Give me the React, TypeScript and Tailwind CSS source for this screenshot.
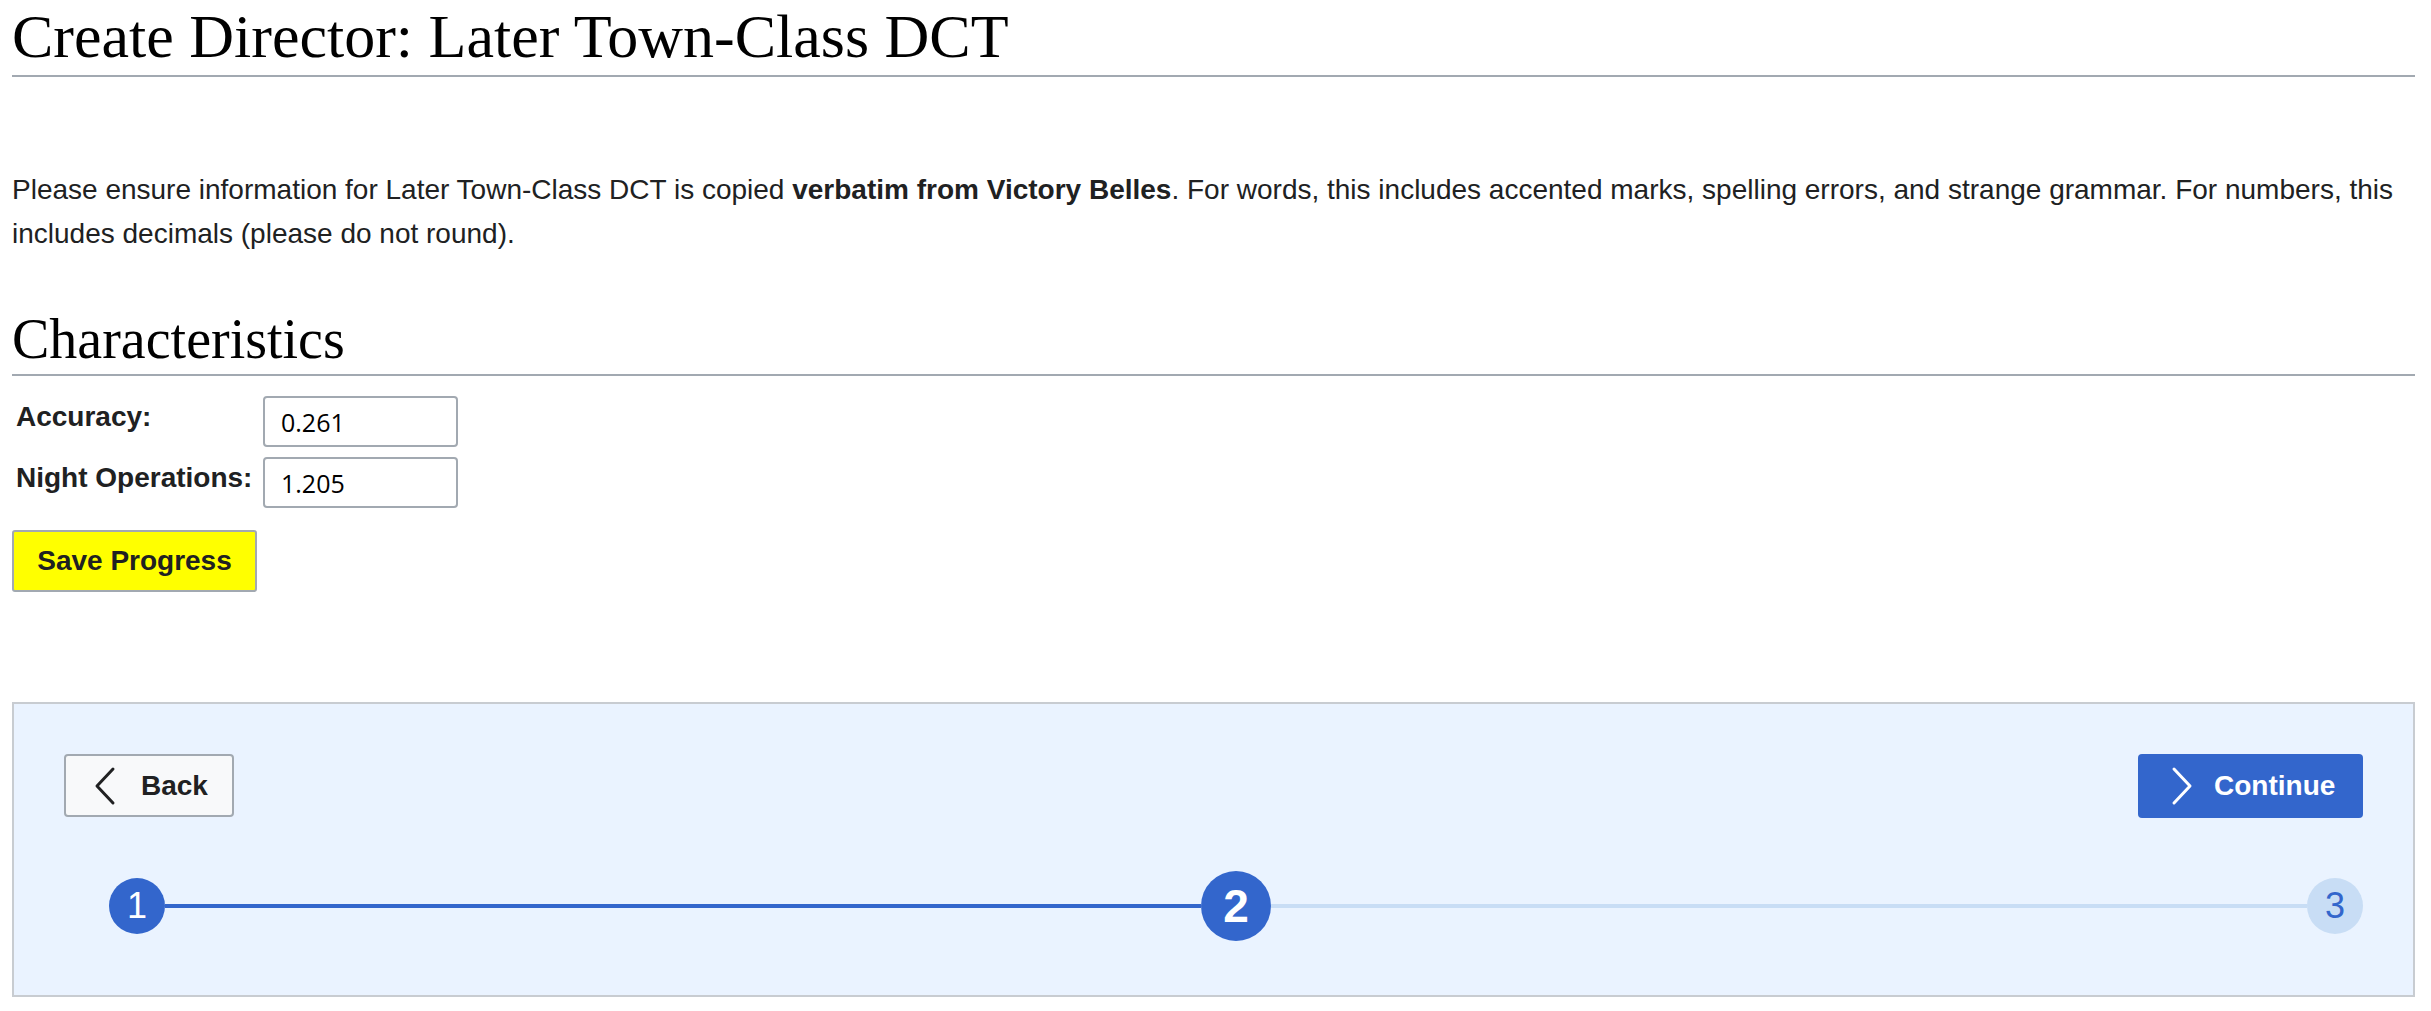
import React from 'react';

const sans = "font-['Liberation_Sans',Arial,sans-serif]";
const serif = "font-['Liberation_Serif','Times_New_Roman',serif]";

const ChevronLeft: React.FC<{ className?: string }> = ({ className }) => (
    <svg width="24" height="40" viewBox="0 0 24 40" fill="none" className={className}>
        <polyline points="20,3 4,20 20,37" stroke="currentColor" strokeWidth="3" strokeLinecap="round" strokeLinejoin="round" />
    </svg>
);

const ChevronRight: React.FC<{ className?: string }> = ({ className }) => (
    <svg width="24" height="40" viewBox="0 0 24 40" fill="none" className={className}>
        <polyline points="4,3 20,20 4,37" stroke="currentColor" strokeWidth="3" strokeLinecap="round" strokeLinejoin="round" />
    </svg>
);

const FieldRow: React.FC<{ label: string, value: string }> = ({ label, value }) => (
    <div className="flex items-start">
        <div className="w-[251px] pl-[4px] pt-[5px] text-[28px] leading-[32px] font-bold text-[#202122]">{label}</div>
        <input
            defaultValue={value}
            className="w-[195px] h-[51px] border-2 border-[#a2a9b1] rounded-[4px] bg-white pl-[16px] text-[25px] text-black font-['Open_Sans','Noto_Sans',sans-serif] outline-none"
        />
    </div>
);

export default function App() {
    return (
        <div className={`min-h-screen bg-white pl-[12px] pr-[16px] ${sans}`}>
            {/* Page heading */}
            <h1 className={`${serif} mt-[2px] text-[62px] leading-[68px] font-normal text-black pb-[5px] border-b-2 border-[#a2a9b1]`}>
                Create Director: Later Town-Class DCT
            </h1>

            <p className="mt-[91px] text-[28px] leading-[44px] text-[#202122]">
                Please ensure information for Later Town-Class DCT is copied <b>verbatim from Victory Belles</b>. For words, this includes accented marks, spelling errors, and strange grammar. For numbers, this includes decimals (please do not round).
            </p>

            <h2 className={`${serif} mt-[53px] text-[56px] leading-[61px] font-normal text-black pb-[4px] border-b-2 border-[#a2a9b1]`}>
                Characteristics
            </h2>

            {/* Form */}
            <div className="mt-[20px] flex flex-col gap-[10px]">
                <FieldRow label="Accuracy:" value="0.261" />
                <FieldRow label="Night Operations:" value="1.205" />
            </div>

            <button className="mt-[22px] w-[245px] h-[62px] bg-[#ffff00] border-2 border-[#a2a9b1] rounded-[3px] text-[28px] font-bold text-[#202122] flex items-center justify-center">
                Save Progress
            </button>

            {/* Navigation panel */}
            <div className="mt-[110px] bg-[#eaf3ff] border-2 border-[#c8ccd1] pt-[50px] pb-[54px] px-[50px]">
                <div className="flex items-start justify-between h-[64px]">
                    <button className="w-[170px] h-[63px] bg-[#f8f9fa] border-2 border-[#a2a9b1] rounded-[4px] flex items-center pl-[27px] text-[#202122]">
                        <ChevronLeft />
                        <span className="ml-[24px] text-[28px] font-bold">Back</span>
                    </button>
                    <button className="w-[225px] h-[64px] bg-[#3366cc] rounded-[4px] flex items-center pl-[32px] text-white">
                        <ChevronRight />
                        <span className="ml-[20px] text-[28px] font-bold">Continue</span>
                    </button>
                </div>

                {/* Stepper */}
                <div className="mt-[53px] pl-[45px] flex items-center h-[70px]">
                    <div className="w-[56px] h-[56px] rounded-full bg-[#3366cc] text-white text-[36px] flex items-center justify-center shrink-0">1</div>
                    <div className="flex-1 h-[4px] bg-[#3366cc]"></div>
                    <div className="w-[70px] h-[70px] rounded-full bg-[#3366cc] text-white text-[46px] font-bold flex items-center justify-center shrink-0">2</div>
                    <div className="flex-1 h-[4px] bg-[#c8ddf5]"></div>
                    <div className="w-[56px] h-[56px] rounded-full bg-[#c8ddf5] text-[#3366cc] text-[36px] flex items-center justify-center shrink-0">3</div>
                </div>
            </div>
        </div>
    );
}
